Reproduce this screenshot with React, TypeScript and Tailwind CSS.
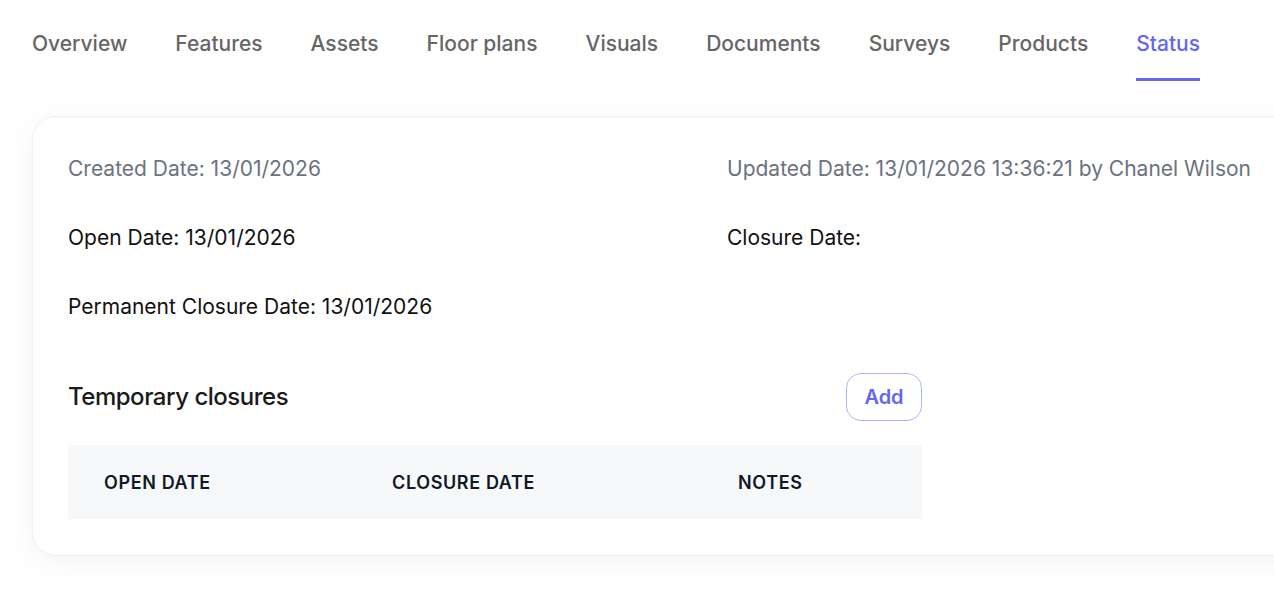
import React from "react";

const tabs = ["Overview", "Features", "Assets", "Floor plans", "Visuals", "Documents", "Surveys", "Products", "Status"];

export default function App() {
  return (
    <div className="min-h-[590px] w-[1274px] overflow-hidden bg-white font-['Inter',sans-serif]">
      <nav className="flex gap-12 pl-8 pt-[30px]">
        {tabs.map((t) => {
          const active = t === "Status";
          return (
            <div key={t} className="flex flex-col">
              <span
                className={`whitespace-nowrap text-[21px] leading-[28px] font-medium ${active ? "text-[#6366f1]" : "text-[#666666]"}`}
              >
                {t}
              </span>
              <div className={`mt-[20px] h-[3px] ${active ? "bg-[#6366f1]" : "bg-transparent"}`} />
            </div>
          );
        })}
      </nav>
      <div className="ml-8 mt-[35px] w-[1300px] rounded-[24px] border border-[#f0f0f0] bg-white pb-[36px] pl-[35px] pr-9 pt-[38px] shadow-[0_6px_30px_rgba(0,0,0,0.05)]">
        <div className="grid grid-cols-[659px_1fr] gap-y-[41px] text-[21px] leading-[28px]">
          <div className="text-[#6b7280]">Created Date: 13/01/2026</div>
          <div className="whitespace-nowrap text-[#6b7280]">Updated Date: 13/01/2026 13:36:21 by Chanel Wilson</div>
          <div className="text-[#111111]">Open Date: 13/01/2026</div>
          <div className="text-[#111111]">Closure Date:</div>
          <div className="text-[#111111]">Permanent Closure Date: 13/01/2026</div>
          <div />
        </div>
        <div className="mt-[52px] w-[854px]">
          <div className="flex items-center justify-between">
            <h2 className="text-[24px] font-medium tracking-[-0.02em] text-[#1a1a1a]">Temporary closures</h2>
            <button className="h-[48px] w-[76px] rounded-[15px] border border-[#a5b4fc] bg-white text-[20px] font-semibold text-[#6366f1]">
              Add
            </button>
          </div>
          <table className="mt-6 w-full border-collapse">
            <thead>
              <tr className="bg-[#f7f8fa] text-left text-[18px] uppercase tracking-[0.035em] text-[#111827]">
                <th className="h-[74px] w-[288px] px-9 font-semibold">Open Date</th>
                <th className="h-[74px] w-[346px] px-9 font-semibold">Closure Date</th>
                <th className="h-[74px] px-9 font-semibold">Notes</th>
              </tr>
            </thead>
          </table>
        </div>
      </div>
    </div>
  );
}
